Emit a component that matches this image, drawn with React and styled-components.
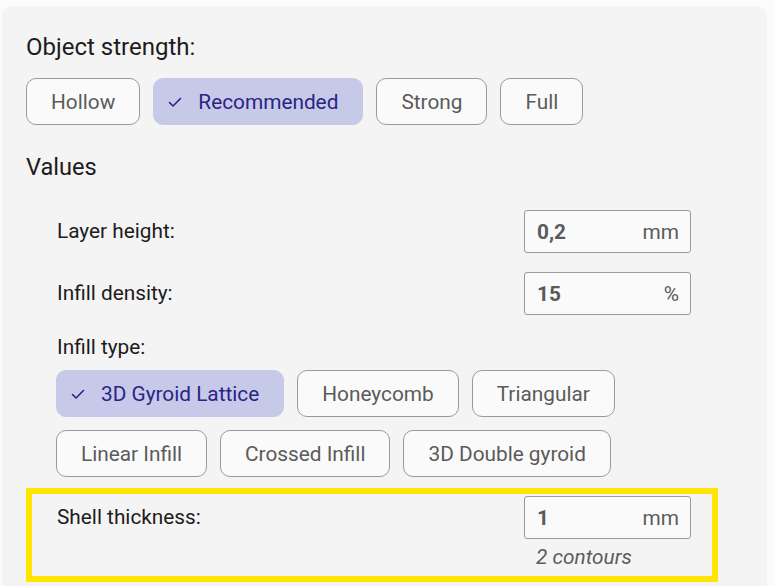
import React, { useState } from 'react'
import styled, { createGlobalStyle } from 'styled-components'

const GlobalStyle = createGlobalStyle`
  body {
    margin: 0;
    background: #fbfbfb;
    font-family: Roboto, "Liberation Sans", sans-serif;
    overflow: hidden;
  }
`;

const Panel = styled.div`
  margin: 6px 0 0 2px;
  width: 765px;
  min-height: 640px;
  box-sizing: border-box;
  padding: 27px 0 0 24px;
  background: #f4f4f4;
  border-radius: 10px;
`;

const Title = styled.h2`
  margin: 0;
  font-size: 24px;
  line-height: 28px;
  font-weight: 400;
  color: #1d1b20;
`;

const ChipRow = styled.div`
  display: flex;
  flex-wrap: wrap;
  gap: 13px;
  margin-top: ${p => p.$top || 0}px;
`;

const Chip = styled.button`
  display: flex;
  align-items: center;
  gap: 14px;
  height: 47px;
  box-sizing: border-box;
  padding: ${p => (p.$active ? '0 24px 0 12px' : '0 24px')};
  border: 1px solid ${p => (p.$active ? '#c7c9e9' : '#9a9a9a')};
  border-radius: 10px;
  background: ${p => (p.$active ? '#c7c9e9' : '#fafafa')};
  color: ${p => (p.$active ? '#2b2485' : '#5b5b5b')};
  font-family: Roboto, "Liberation Sans", sans-serif;
  font-size: 20.8px;
  cursor: pointer;
  white-space: nowrap;
`;

const Section = styled.h3`
  margin: 28px 0 0;
  font-size: 23.6px;
  line-height: 28px;
  font-weight: 400;
  color: #1d1b20;
`;

const Fields = styled.div`
  margin: 29px 0 0 30px;
  width: 635px;
  display: flex;
  flex-direction: column;
  gap: 19px;
`;

const Field = styled.div`
  display: flex;
  align-items: center;
  justify-content: space-between;
`;

const Label = styled.span`
  font-size: 20.8px;
  line-height: 25px;
  color: #1d1b20;
  padding-left: ${p => (p.$inset ? 1 : 0)}px;
`;

const InputBox = styled.div`
  width: 167px;
  height: 43px;
  box-sizing: border-box;
  display: flex;
  align-items: center;
  justify-content: space-between;
  padding: 0 11px 0 12px;
  border: 1px solid #9a9a9a;
  border-radius: 3px;
  background: #fafafa;
  color: #5b5b5b;
  font-size: 20.8px;
`;

const Value = styled.span`
  font-weight: 700;
`;

const TypeBlock = styled.div`
  margin-top: 1px;
  margin-bottom: 11px;
`;

const Highlight = styled.div`
  width: 692px;
  box-sizing: border-box;
  border: 6px solid #ffe500;
  padding: 2px 21px 6px 25px;
`;

const Hint = styled.div`
  margin: 6px 0 0 auto;
  width: 167px;
  box-sizing: border-box;
  padding-left: 12px;
  font-size: 20.8px;
  line-height: 25px;
  font-style: italic;
  color: #5b5b5b;
`;

const Check = () => (
  <svg width="18" height="18" viewBox="0 0 18 18" fill="none">
    <path d="M3.5 9.5 L7 13 L14.5 5.5" stroke="#2b2485" strokeWidth="1.6" strokeLinecap="round" strokeLinejoin="round" />
  </svg>
)

const strengths = ['Hollow', 'Recommended', 'Strong', 'Full']
const infillRow1 = ['3D Gyroid Lattice', 'Honeycomb', 'Triangular']
const infillRow2 = ['Linear Infill', 'Crossed Infill', '3D Double gyroid']

const App = () => {
  const [strength, setStrength] = useState('Recommended')
  const [infill, setInfill] = useState('3D Gyroid Lattice')

  const renderChip = (name, active, onPick) => (
    <Chip key={name} $active={active} onClick={() => onPick(name)}>
      {active && <Check />}
      {name}
    </Chip>
  )

  return (
    <>
      <GlobalStyle />
      <Panel>
        <Title>Object strength:</Title>
        <ChipRow $top={17}>
          {strengths.map(s => renderChip(s, s === strength, setStrength))}
        </ChipRow>

        <Section>Values</Section>
        <Fields>
          <Field>
            <Label $inset>Layer height:</Label>
            <InputBox><Value>0,2</Value><span>mm</span></InputBox>
          </Field>
          <Field>
            <Label $inset>Infill density:</Label>
            <InputBox><Value>15</Value><span>%</span></InputBox>
          </Field>
          <TypeBlock>
            <Label $inset>Infill type:</Label>
            <ChipRow $top={10}>
              {infillRow1.map(s => renderChip(s, s === infill, setInfill))}
            </ChipRow>
            <ChipRow $top={13}>
              {infillRow2.map(s => renderChip(s, s === infill, setInfill))}
            </ChipRow>
          </TypeBlock>
        </Fields>

        <Highlight>
          <Field>
            <Label>Shell thickness:</Label>
            <InputBox><Value>1</Value><span>mm</span></InputBox>
          </Field>
          <Hint>2 contours</Hint>
        </Highlight>
      </Panel>
    </>
  )
}

export default App
